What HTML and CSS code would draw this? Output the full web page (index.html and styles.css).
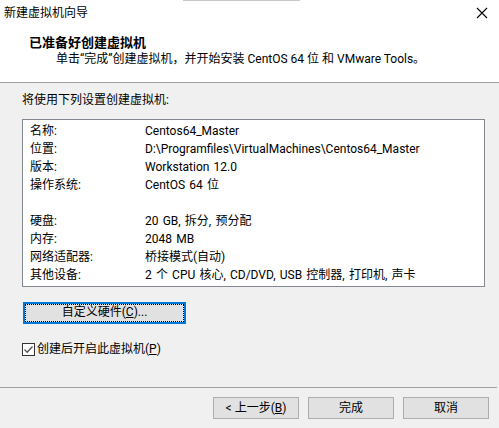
FILE: index.html
```html
<!DOCTYPE html>
<html lang="zh-CN">
<head>
<meta charset="utf-8">
<title>新建虚拟机向导</title>
<link rel="stylesheet" href="styles.css">
</head>
<body>
<div class="window">
  <div class="header">
    <div class="topline"></div>
    <div class="titlebar">
      <span class="title">新建虚拟机向导</span>
      <svg class="close" width="12" height="12" viewBox="0 0 12 12"><path d="M1 1 L11 11 M11 1 L1 11" stroke="#000" stroke-width="1.1" fill="none"/></svg>
    </div>
    <div class="heading">已准备好创建虚拟机</div>
    <div class="subtitle">单击“完成”创建虚拟机，并开始安装 CentOS 64 位 和 VMware Tools。</div>
  </div>
  <div class="content">
    <div class="intro">将使用下列设置创建虚拟机:</div>
    <div class="summary">
      <div class="k">名称:</div><div class="v">Centos64_Master</div>
      <div class="k">位置:</div><div class="v">D:\Programfiles\VirtualMachines\Centos64_Master</div>
      <div class="k">版本:</div><div class="v">Workstation 12.0</div>
      <div class="k">操作系统:</div><div class="v">CentOS 64 位</div>
      <div class="k blank"></div><div class="v blank"></div>
      <div class="k">硬盘:</div><div class="v">20 GB, 拆分, 预分配</div>
      <div class="k">内存:</div><div class="v">2048 MB</div>
      <div class="k">网络适配器:</div><div class="v">桥接模式(自动)</div>
      <div class="k">其他设备:</div><div class="v">2 个 CPU 核心, CD/DVD, USB 控制器, 打印机, 声卡</div>
    </div>
    <button class="btn custom"><span class="focus">自定义硬件(<u>C</u>)...</span></button>
    <label class="check">
      <span class="box"><svg width="11" height="11" viewBox="0 0 11 11"><path d="M1.5 5.5 L4.2 8.2 L9.5 2.5" stroke="#555" stroke-width="1.3" fill="none"/></svg></span>
      <span>创建后开启此虚拟机(<u>P</u>)</span>
    </label>
  </div>
  <div class="sep"></div>
  <div class="footer">
    <button class="btn">&lt; 上一步(<u>B</u>)</button>
    <button class="btn">完成</button>
    <button class="btn">取消</button>
  </div>
</div>
</body>
</html>
```
FILE: styles.css
```css
* { box-sizing: border-box; }
html, body { margin: 0; padding: 0; }
body {
  width: 499px;
  height: 428px;
  overflow: hidden;
  background: #f0f0f0;
  font-family: Roboto, "Noto Sans CJK SC", sans-serif;
  font-size: 12px;
  color: #000;
}
.window { position: relative; width: 499px; height: 428px; }
.header {
  position: relative;
  background: #fff;
  height: 83px;
  border-bottom: 1px solid #a0a0a0;
}
.topline {
  position: absolute;
  top: 0; left: 183px;
  width: 117px; height: 1px;
  background: #c8c8c8;
}
.titlebar {
  display: flex;
  justify-content: space-between;
  align-items: center;
  height: 24px;
  padding: 0 11px 0 4px;
  line-height: 16px;
}
.title { font-family: "Noto Sans CJK SC", sans-serif; }
.close { margin-top: 2px; }
.heading {
  margin-top: 9px;
  padding-left: 29px;
  font-family: "Noto Sans CJK SC", sans-serif;
  font-weight: bold;
  font-size: 13px;
  line-height: 17px;
}
.subtitle {
  padding-left: 56px;
  line-height: 16px;
  margin-top: 1px;
}
.content {
  display: flex;
  flex-direction: column;
  align-items: flex-start;
  padding: 9px 14px 0 22px;
  height: 304px;
}
.intro { line-height: 16px; }
.summary {
  margin-top: 11px;
  width: 463px;
  display: grid;
  grid-template-columns: 115px 1fr;
  grid-auto-rows: 18px;
  line-height: 18px;
  padding: 2px 0 2px 7px;
  background: #fff;
  border: 1px solid #828790;
}
.k, .v { white-space: nowrap; }
.v { word-spacing: 1.2px; }
.btn {
  font: inherit;
  color: #000;
  background: #e1e1e1;
  border: 1px solid #adadad;
  height: 22px;
  width: 86px;
  padding: 0;
  line-height: 18px;
}
.btn u, .check u { text-decoration: underline; text-underline-offset: 1px; }
.custom {
  margin-top: 15px;
  margin-left: 1px;
  width: 163px;
  border: 2px solid #0078d7;
  padding: 1px;
}
.custom .focus {
  display: block;
  height: 16px;
  line-height: 15px;
  outline: 1px dotted #000;
}
.check {
  margin-top: 17px;
  display: flex;
  align-items: center;
  gap: 2px;
  line-height: 16px;
}
.box {
  width: 13px; height: 13px;
  border: 1px solid #333;
  background: #fff;
  display: flex;
  align-items: center;
  justify-content: center;
}
.sep {
  height: 1px;
  background: #a0a0a0;
  margin: 0 2px 0 0;
}
.footer {
  display: flex;
  justify-content: flex-end;
  gap: 9px;
  padding: 9px 10px 0 0;
}
```
